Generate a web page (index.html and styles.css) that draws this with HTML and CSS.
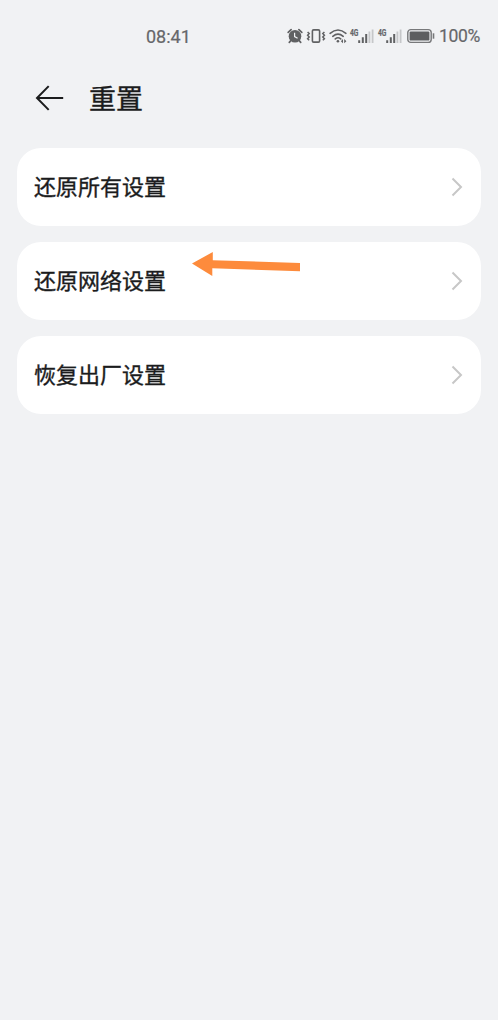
FILE: index.html
```html
<!DOCTYPE html>
<html lang="zh-CN">
<head>
<meta charset="utf-8">
<title>重置</title>
<link rel="stylesheet" href="styles.css">
</head>
<body>
<div class="status">
  <span class="time">08:41</span>
  <div class="icons">
    <svg class="alarm" width="16" height="16" viewBox="0 0 16 16">
      <circle cx="8" cy="8.2" r="6.3" fill="#606163"/>
      <path d="M1.2 4.3L4.1 1.6M14.8 4.3L11.9 1.6M3.8 12.7L2.3 14.3M12.2 12.7L13.7 14.3" stroke="#606163" stroke-width="1.7" stroke-linecap="round"/>
      <path d="M7.6 4.7V8.6L10.6 10.3" fill="none" stroke="#f1f2f4" stroke-width="1.2"/>
    </svg>
    <svg class="vibrate" width="20" height="16" viewBox="0 0 20 16">
      <rect x="6.4" y="1.9" width="7.2" height="12.2" rx="1.2" fill="none" stroke="#606163" stroke-width="1.6"/>
      <path d="M1.6 4L3.2 5.6L1.6 7.3L3.2 9L1.6 10.7L3.2 12.2M18.4 4L16.8 5.6L18.4 7.3L16.8 9L18.4 10.7L16.8 12.2" fill="none" stroke="#606163" stroke-width="1.5"/>
    </svg>
    <svg class="wifi" width="19" height="16" viewBox="0 0 19 16">
      <path d="M1.1 5.3Q9 -1.3 16.9 5.3M3.8 8.3Q9 3.9 14.2 8.3M6.3 10.9Q9 8.6 11.7 10.9" fill="none" stroke="#606163" stroke-width="1.6" stroke-linecap="round"/>
      <circle cx="8.9" cy="13.2" r="1.3" fill="#606163"/>
      <path d="M14 11L11.9 13.2L14 15.2ZM15.2 11L17.4 13.2L15.2 15.2Z" fill="#606163"/>
    </svg>
    <div class="signal">
      <span class="net">4G</span>
      <svg width="16" height="15" viewBox="0 0 16 15">
        <path d="M1.2 11.2V14M4.8 8.3V14M8.2 5V14" stroke="#606163" stroke-width="2"/>
        <path d="M11.4 2.6V14M14.6 .5V14" stroke="#c6c7c9" stroke-width="1.8"/>
      </svg>
    </div>
    <div class="signal">
      <span class="net">4G</span>
      <svg width="16" height="15" viewBox="0 0 16 15">
        <path d="M1.2 11.2V14M4.8 8.3V14M8.2 5V14" stroke="#606163" stroke-width="2"/>
        <path d="M11.4 2.6V14M14.6 .5V14" stroke="#c6c7c9" stroke-width="1.8"/>
      </svg>
    </div>
    <svg class="battery" width="28" height="16" viewBox="0 0 28 16">
      <rect x=".8" y="1.6" width="23.4" height="12.8" rx="3" fill="none" stroke="#77787a" stroke-width="1.4"/>
      <rect x="2.6" y="3.4" width="19.8" height="9.2" rx="1.2" fill="#5d5e60"/>
      <path d="M26.5 5.3V10.7" stroke="#77787a" stroke-width="1.6"/>
    </svg>
    <span class="percent">100%</span>
  </div>
</div>
<header class="header">
  <svg class="back" width="30" height="28" viewBox="0 0 30 28">
    <path d="M13.7 2.1L2 14L13.7 25.9M2 14H28.2" fill="none" stroke="#1b1c1d" stroke-width="2"/>
  </svg>
  <h1 class="title">重置</h1>
</header>
<main class="list">
  <div class="card"><span class="label">还原所有设置</span>
    <svg class="chevron" width="12" height="20" viewBox="0 0 12 20"><path d="M1.5 1.5L10 10L1.5 18.5" fill="none" stroke="#c7c7c7" stroke-width="2"/></svg>
  </div>
  <div class="card"><span class="label">还原网络设置</span>
    <svg class="chevron" width="12" height="20" viewBox="0 0 12 20"><path d="M1.5 1.5L10 10L1.5 18.5" fill="none" stroke="#c7c7c7" stroke-width="2"/></svg>
    <svg class="pointer" width="110" height="26" viewBox="0 0 110 26"><path d="M0 11.5L20.8 0V8.3L108 10.9V19.3L20.3 16.2V24Z" fill="#fd8b3c"/></svg>
  </div>
  <div class="card"><span class="label">恢复出厂设置</span>
    <svg class="chevron" width="12" height="20" viewBox="0 0 12 20"><path d="M1.5 1.5L10 10L1.5 18.5" fill="none" stroke="#c7c7c7" stroke-width="2"/></svg>
  </div>
</main>
</body>
</html>
```
FILE: styles.css
```css
body {
  margin: 0;
  min-height: 1020px;
  background: #f1f2f4;
  color: #1b1c1d;
  font-family: "Noto Sans CJK SC", sans-serif;
}
svg { display: block; flex: none; }
.status {
  display: flex;
  justify-content: space-between;
  align-items: center;
  height: 72px;
  padding: 0 17px 0 146px;
  color: #66676a;
  font-family: Roboto, sans-serif;
  font-size: 18px;
  -webkit-text-stroke: .2px #66676a;
}
.icons { display: flex; align-items: center; }
.vibrate { margin-left: 3px; }
.wifi { margin: 0 2px 0 3px; }
.signal { display: flex; align-items: flex-start; width: 24px; margin-right: 4px; }
.signal svg { margin-left: -1px; }
.net {
  width: 9px;
  font-size: 8px;
  font-weight: 700;
  line-height: 8px;
  letter-spacing: 0;
  transform: scale(.84, 1.2);
  transform-origin: 0 0;
}
.battery { margin-left: 1px; }
.percent { width: 42px; margin-left: 4px; font-size: 17.5px; letter-spacing: -.3px; }
.header {
  display: flex;
  align-items: center;
  height: 52px;
  padding-left: 35px;
}
.title {
  margin: 0 0 0 24px;
  font-size: 27px;
  font-weight: 400;
  line-height: 40px;
  -webkit-text-stroke: .4px #1b1c1d;
}
.list {
  display: flex;
  flex-direction: column;
  gap: 16.5px;
  padding: 24px 17px 0;
}
.card {
  position: relative;
  display: flex;
  justify-content: space-between;
  align-items: center;
  box-sizing: border-box;
  height: 77.5px;
  padding: 0 18px 0 17px;
  border-radius: 24px;
  background: #fff;
  font-size: 22px;
}
.label { padding-bottom: 3px; -webkit-text-stroke: .35px #1b1c1d; }
.pointer { position: absolute; left: 175px; top: 10px; }
```
